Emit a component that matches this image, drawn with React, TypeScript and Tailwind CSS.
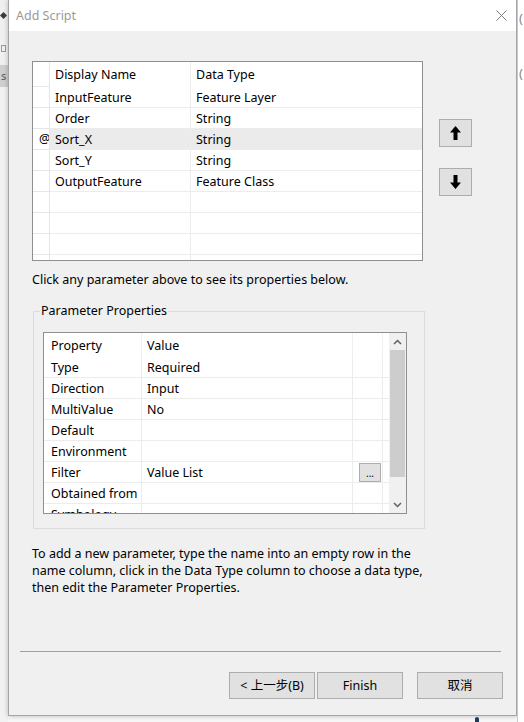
import React from "react";

const paramRows = [
  { name: "InputFeature", type: "Feature Layer" },
  { name: "Order", type: "String" },
  { name: "Sort_X", type: "String", active: true },
  { name: "Sort_Y", type: "String" },
  { name: "OutputFeature", type: "Feature Class" },
  { name: "", type: "" },
  { name: "", type: "" },
  { name: "", type: "" },
  { name: "", type: "" },
];

const props = [
  { k: "Type", v: "Required" },
  { k: "Direction", v: "Input" },
  { k: "MultiValue", v: "No" },
  { k: "Default", v: "" },
  { k: "Environment", v: "" },
  { k: "Filter", v: "Value List", button: true },
  { k: "Obtained from", v: "" },
  { k: "Symbology", v: "" },
];

function ArrowBtn({ down }: { down?: boolean }) {
  return (
    <button className="flex h-[28px] w-[33px] items-center justify-center border border-[#adadad] bg-[#e1e1e1]">
      <svg width="11" height="14" viewBox="0 0 11 14" className={down ? "rotate-180" : ""}>
        <path d="M5.5 0 L11 6.5 H7.5 V14 H3.5 V6.5 H0 Z" fill="#000" />
      </svg>
    </button>
  );
}

function Chevron({ down }: { down?: boolean }) {
  return (
    <svg width="9" height="6" viewBox="0 0 9 6">
      <path d={down ? "M1 1 L4.5 4.5 L8 1" : "M1 5 L4.5 1.5 L8 5"} fill="none" stroke="#606060" strokeWidth="1.5" />
    </svg>
  );
}

function ParamTable() {
  return (
    <div className="h-[200px] w-[391px] overflow-hidden border border-[#8f8f8f] bg-white">
      <div className="flex h-[25px]">
        <div className="w-[17px] shrink-0 border-r border-b border-[#e6e6e6]" />
        <div className="flex w-[141px] shrink-0 items-center border-r border-[#ececec] pl-[5px]">Display Name</div>
        <div className="flex flex-1 items-center pl-[5px]">Data Type</div>
      </div>
      {paramRows.map((r, i) => (
        <div key={i} className="flex h-[21px]">
          <div className="w-[17px] shrink-0 overflow-hidden border-r border-b border-[#e6e6e6] pl-[6px] leading-[20px]">
            {r.active ? "@" : ""}
          </div>
          <div
            className={`flex w-[141px] shrink-0 items-center border-r border-b border-[#ececec] pl-[5px] ${
              r.active ? "bg-[#ebebeb]" : ""
            }`}
          >
            {r.name}
          </div>
          <div className={`flex flex-1 items-center border-b border-[#ececec] pl-[5px] ${r.active ? "bg-[#ebebeb]" : ""}`}>
            {r.type}
          </div>
        </div>
      ))}
    </div>
  );
}

function PropertyGrid() {
  return (
    <div className="ml-[9px] mt-[20px] flex h-[182px] w-[364px] overflow-hidden border border-[#8f8f8f] bg-white">
      <div className="flex-1 overflow-hidden">
        <div className="flex h-[24px]">
          <div className="flex w-[98px] shrink-0 items-center border-r border-[#f0f0f0] pl-[7px]">Property</div>
          <div className="flex w-[211px] shrink-0 items-center border-r border-[#f0f0f0] pl-[5px]">Value</div>
          <div className="w-[30px] shrink-0 border-r border-[#f0f0f0]" />
          <div className="flex-1" />
        </div>
        {props.map((p) => (
          <div key={p.k} className="flex h-[21px]">
            <div className="flex w-[98px] shrink-0 items-center border-r border-b border-[#ececec] pl-[7px]">{p.k}</div>
            <div className="flex w-[211px] shrink-0 items-center border-r border-b border-[#ececec] pl-[5px]">{p.v}</div>
            <div className="w-[30px] shrink-0 border-r border-b border-[#ececec] pl-[6px] pt-[1px]">
              {p.button && (
                <div className="flex h-[19px] w-[22px] items-center justify-center border border-[#adadad] bg-[#e1e1e1] text-[10px] leading-none">
                  ...
                </div>
              )}
            </div>
            <div className="flex-1 border-b border-[#ececec]" />
          </div>
        ))}
      </div>
      <div className="flex w-[17px] shrink-0 flex-col bg-[#f0f0f0]">
        <div className="flex h-[17px] items-center justify-center">
          <Chevron />
        </div>
        <div className="flex-1 px-[1px]">
          <div className="h-[127px] bg-[#cdcdcd]" />
        </div>
        <div className="flex h-[17px] items-center justify-center">
          <Chevron down />
        </div>
      </div>
    </div>
  );
}

function Dialog() {
  return (
    <div className="flex h-[716px] w-[509px] flex-col border-x border-b border-[#a5a5a5] bg-[#f0f0f0] shadow-[0_0_5px_rgba(0,0,0,0.25)]">
      <div className="flex h-[31px] shrink-0 items-center justify-between bg-white pl-[7px] pr-[9px]">
        <span className="text-[12.5px] text-[#9a9a9a]">Add Script</span>
        <svg width="11" height="11" viewBox="0 0 11 11">
          <path d="M0.5 0.5 L10.5 10.5 M10.5 0.5 L0.5 10.5" stroke="#7a7a7a" strokeWidth="1" />
        </svg>
      </div>

      <div className="mt-[30px] flex pl-[23px]">
        <ParamTable />
        <div className="ml-[16px] flex flex-col">
          <div className="mt-[58px]">
            <ArrowBtn />
          </div>
          <div className="mt-[21px]">
            <ArrowBtn down />
          </div>
        </div>
      </div>

      <p className="mt-[10px] pl-[23px]">Click any parameter above to see its properties below.</p>

      <div className="relative ml-[24px] mt-[23px] h-[218px] w-[392px] border border-[#dcdcdc]">
        <span className="absolute -top-[10px] left-[6px] bg-[#f0f0f0] px-[1px]">Parameter Properties</span>
        <PropertyGrid />
      </div>

      <p className="mt-[16px] pl-[23px]">
        To add a new parameter, type the name into an empty row in the
        <br />
        name column, click in the Data Type column to choose a data type,
        <br />
        then edit the Parameter Properties.
      </p>

      <div className="ml-[11px] mt-[55px] w-[481px] border-t border-[#a0a0a0]" />

      <div className="mt-[20px] flex pl-[220px]">
        <button className="h-[27px] w-[86px] border border-[#adadad] bg-[#e1e1e1]">&lt; 上一步(B)</button>
        <button className="ml-[2px] h-[27px] w-[86px] border border-[#adadad] bg-[#e1e1e1]">Finish</button>
        <button className="ml-[14px] h-[27px] w-[86px] border border-[#adadad] bg-[#e1e1e1]">取消</button>
      </div>
    </div>
  );
}

export default function App() {
  return (
    <div className="flex h-[722px] w-[524px] overflow-hidden bg-[#f7f7f7] font-['Segoe_UI','Noto_Sans','Noto_Sans_CJK_SC',sans-serif] text-[12.5px] leading-[17px] text-black">
      <div className="flex w-[8px] shrink-0 flex-col bg-[#f0f0f0]">
        <div className="mt-[13px] ml-[1px] h-[5px] w-[5px] rotate-45 bg-[#3a3a3a]" />
        <div className="mt-[27px] ml-[1px] h-[7px] w-[5px] border border-[#9a9a9a]" />
        <div className="mt-[13px] h-[22px] bg-[#cfcfcf] pl-[1px] text-[11px] leading-[22px] text-[#555]">s</div>
        <div className="flex-1 bg-[#f2f2f2]" />
      </div>
      <div className="flex flex-col">
        <Dialog />
        <div className="relative flex-1">
          <div className="ml-[467px] mt-[1px] h-[5px] w-[4px] rounded-t-full bg-[#1f3a5a]" />
        </div>
      </div>
      <div className="flex flex-1 flex-col border-l border-[#c8c8c8] bg-white">
        <span className="mt-[10px] pl-[1px] text-[13px] text-[#888]">(</span>
        <span className="mt-[38px] pl-[1px] text-[13px] text-[#888]">(</span>
      </div>
    </div>
  );
}
